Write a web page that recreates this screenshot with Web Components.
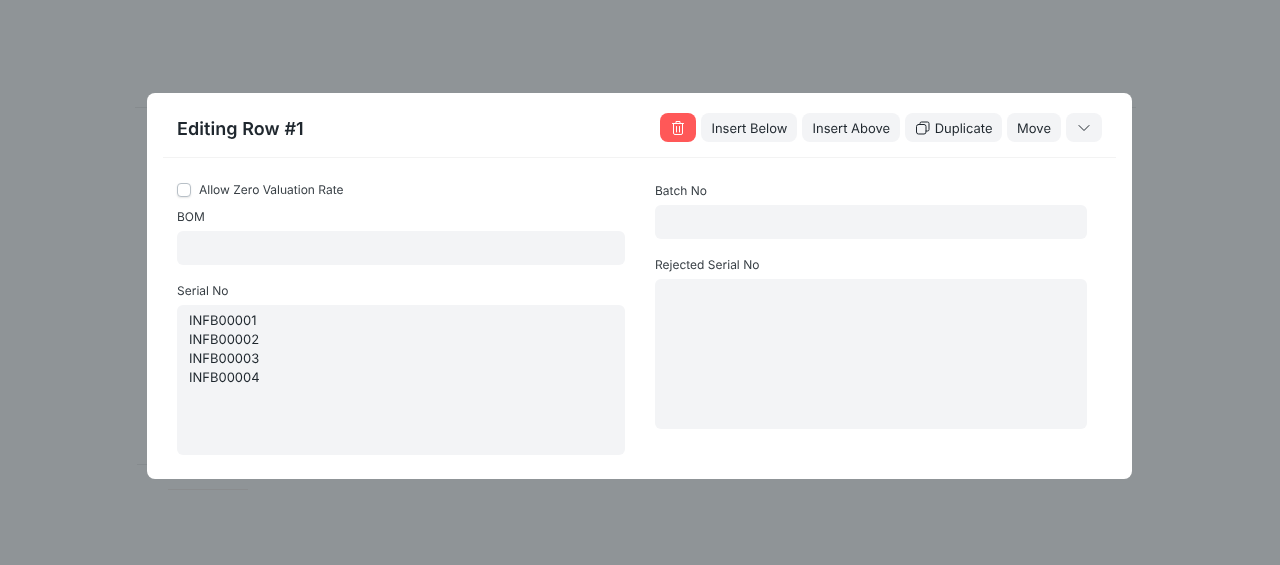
<!DOCTYPE html>
<html>
<head>
<meta charset="utf-8">
<title>Editing Row</title>
<style>
  html, body { margin: 0; height: 100%; }
  body {
    background-color: #8f9497;
    /* faint rules of the page dimmed behind the dialog */
    background-image:
      linear-gradient(#868b8e, #868b8e),
      linear-gradient(#868b8e, #868b8e),
      linear-gradient(#868b8e, #868b8e),
      linear-gradient(#8a8c8e, #8a8c8e);
    background-repeat: no-repeat;
    background-size: 12px 1px, 4px 1px, 10px 1px, 80px 1px;
    background-position: 135px 107px, 1132px 107px, 137px 464px, 168px 489px;
    font-family: Inter, "Liberation Sans", sans-serif;
    text-rendering: geometricPrecision;
    overflow: hidden;
  }
</style>
</head>
<body>
<row-dialog heading="Editing Row #1">
  <row-button slot="actions" kind="danger" label="Delete">
    <svg width="16" height="16" viewBox="0 0 16 16" fill="none" stroke="#fff" stroke-width="1" stroke-linecap="round" stroke-linejoin="round"><path d="M2.500 3.500h11M6 3.500V1.500h4v2M3.500 3.500v9.500a1.500 1.500 0 0 0 1.500 1.500h6a1.500 1.500 0 0 0 1.500-1.500V3.500M6.500 6.500v5.500M9.500 6.500v5.500"/></svg>
  </row-button>
  <row-button slot="actions">Insert Below</row-button>
  <row-button slot="actions">Insert Above</row-button>
  <row-button slot="actions" style="padding-left:11px;padding-right:9.5px;gap:4.5px">
    <svg style="margin-top:-3px" width="14" height="14" viewBox="0 0 14 14" fill="none" stroke="#1f272e" stroke-width="1" stroke-linecap="round" stroke-linejoin="round"><rect x="0.500" y="3.500" width="9.500" height="9.500" rx="2"/><path d="M4 3.500V2.500A1.500 1.500 0 0 1 5.500 1h6A1.500 1.500 0 0 1 13 2.500v6a1.500 1.500 0 0 1-1.500 1.500H10"/></svg>
    Duplicate
  </row-button>
  <row-button slot="actions">Move</row-button>
  <row-button slot="actions" kind="icon" label="More">
    <svg width="12" height="12" viewBox="0 0 12 12" fill="none" stroke="#1f272e" stroke-width="1" stroke-linecap="round" stroke-linejoin="round"><path d="M1 3.500 6 8.500l5-5"/></svg>
  </row-button>

  <form-column slot="left" style="--col-width:448px">
    <check-field label="Allow Zero Valuation Rate"></check-field>
    <text-field label="BOM"></text-field>
    <text-field label="Serial No" multiline>INFB00001
INFB00002
INFB00003
INFB00004</text-field>
  </form-column>
  <form-column slot="right" style="--col-width:432px">
    <text-field label="Batch No"></text-field>
    <text-field label="Rejected Serial No" multiline></text-field>
  </form-column>
</row-dialog>

<script>
class RowDialog extends HTMLElement {
  connectedCallback() {
    this.attachShadow({ mode: 'open' });
    const heading = this.getAttribute('heading') || '';
    this.shadowRoot.innerHTML = `
      <style>
        :host {
          display: flex;
          flex-direction: column;
          box-sizing: border-box;
          width: 985px;
          height: 386px;
          margin: 93px 0 0 147px;
          background: #fff;
          border-radius: 8px;
          color: #1f272e;
          will-change: transform;
        }
        header {
          display: flex;
          justify-content: space-between;
          align-items: flex-start;
          height: 65px;
          margin: 0 16px;
          padding: 20px 14px 0;
          box-sizing: border-box;
          border-bottom: 1px solid #f3f3f3;
        }
        h2 {
          margin: 2px 0 0;
          font-size: 18px;
          font-weight: 600;
          line-height: 29px;
          letter-spacing: 0.07px;
        }
        .actions { display: flex; gap: 5px; }
        .body {
          display: flex;
          gap: 30px;
          padding: 25px 30px 0;
        }
      </style>
      <header>
        <h2>${heading}</h2>
        <div class="actions"><slot name="actions"></slot></div>
      </header>
      <div class="body">
        <slot name="left"></slot>
        <slot name="right"></slot>
      </div>
    `;
  }
}

class RowButton extends HTMLElement {
  connectedCallback() {
    this.attachShadow({ mode: 'open' });
    const kind = this.getAttribute('kind');
    this.shadowRoot.innerHTML = `
      <style>
        :host {
          display: inline-flex;
          align-items: center;
          justify-content: center;
          gap: 5px;
          box-sizing: border-box;
          height: 29px;
          padding: 3px 10px 0;
          border-radius: 8px;
          background: ${kind === 'danger' ? '#ff5858' : '#f3f4f6'};
          font-size: 13px;
          line-height: 1;
          color: #1f272e;
          white-space: nowrap;
        }
        :host([kind]) { width: 36px; padding: 1px 0 0; }
        ::slotted(svg) { display: block; }
      </style>
      <slot></slot>
    `;
  }
}

class FormColumn extends HTMLElement {
  connectedCallback() {
    this.attachShadow({ mode: 'open' });
    this.shadowRoot.innerHTML = `
      <style>
        :host {
          display: flex;
          flex-direction: column;
          width: var(--col-width);
        }
      </style>
      <slot></slot>
    `;
  }
}

class CheckField extends HTMLElement {
  connectedCallback() {
    this.attachShadow({ mode: 'open' });
    this.shadowRoot.innerHTML = `
      <style>
        :host {
          display: flex;
          align-items: center;
          gap: 8px;
          height: 14px;
          margin-bottom: 12px;
          font-size: 12px;
          color: #383f45;
        }
        .box {
          box-sizing: border-box;
          width: 14px;
          height: 14px;
          background: #fff;
          border: 1px solid #b8c0c7;
          border-radius: 4px;
          box-shadow: 0 1px 2px rgba(0,0,0,0.1);
        }
        .text { padding-bottom: 2px; }
      </style>
      <span class="box"></span>
      <span class="text">${this.getAttribute('label')}</span>
    `;
  }
}

class TextField extends HTMLElement {
  connectedCallback() {
    this.attachShadow({ mode: 'open' });
    const multiline = this.hasAttribute('multiline');
    this.shadowRoot.innerHTML = `
      <style>
        :host {
          display: block;
          margin-bottom: 18px;
        }
        label {
          display: block;
          height: 14px;
          margin: 1px 0 7px;
          font-size: 12px;
          line-height: 14px;
          color: #383f45;
        }
        .control {
          box-sizing: border-box;
          height: ${multiline ? 150 : 34}px;
          padding: 7px 12px;
          background: #f3f4f6;
          border-radius: 6px;
          font-size: 13px;
          line-height: 19px;
          color: #1f272e;
          white-space: pre-line;
        }
      </style>
      <label>${this.getAttribute('label')}</label>
      <div class="control"><slot></slot></div>
    `;
  }
}

customElements.define('row-dialog', RowDialog);
customElements.define('row-button', RowButton);
customElements.define('form-column', FormColumn);
customElements.define('check-field', CheckField);
customElements.define('text-field', TextField);
</script>
</body>
</html>
